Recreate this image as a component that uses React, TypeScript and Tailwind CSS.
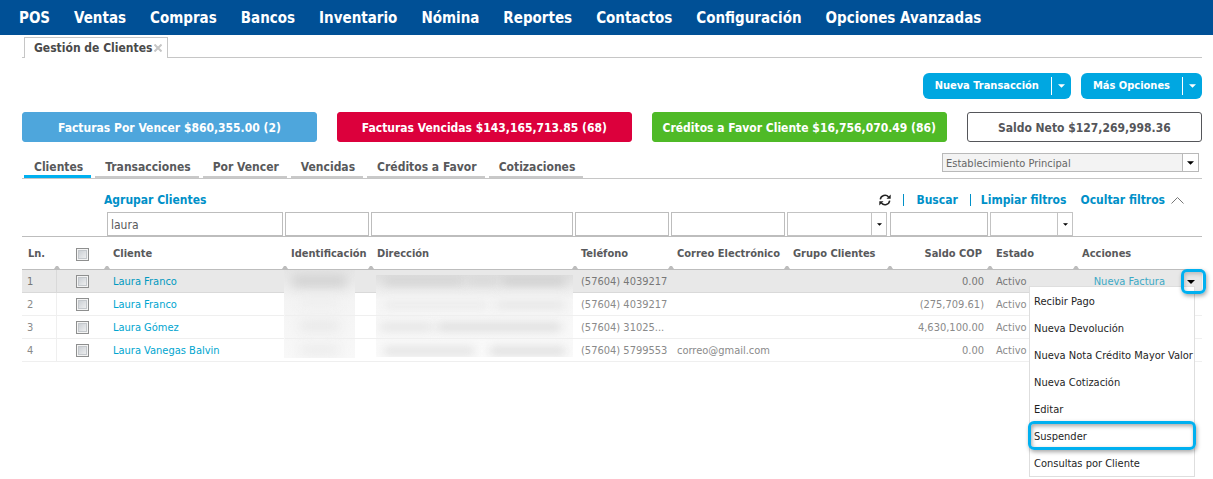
import { useState } from 'react';
import { clsx } from 'clsx';

interface Client {
  id: number;
  name: string;
  phone: string;
  email: string;
  balance: string;
}

interface SummaryCard {
  label: string;
  className: string;
}

const NAV_ITEMS = [
  'POS',
  'Ventas',
  'Compras',
  'Bancos',
  'Inventario',
  'Nómina',
  'Reportes',
  'Contactos',
  'Configuración',
  'Opciones Avanzadas',
];

const SUMMARY: SummaryCard[] = [
  { label: 'Facturas Por Vencer $860,355.00 (2)', className: 'flex-[295] bg-[#4ea6dc] border-[#4ea6dc] text-white' },
  { label: 'Facturas Vencidas $143,165,713.85 (68)', className: 'flex-[295] bg-[#dc003c] border-[#dc003c] text-white' },
  { label: 'Créditos a Favor Cliente $16,756,070.49 (86)', className: 'flex-[295] bg-[#4fba27] border-[#4fba27] text-white' },
  { label: 'Saldo Neto $127,269,998.36', className: 'flex-[235] bg-white border-[#55565a] text-[#55565a]' },
];

const TABS = ['Clientes', 'Transacciones', 'Por Vencer', 'Vencidas', 'Créditos a Favor', 'Cotizaciones'];

const CLIENTS: Client[] = [
  { id: 1, name: 'Laura Franco', phone: '(57604) 4039217', email: '', balance: '0.00' },
  { id: 2, name: 'Laura Franco', phone: '(57604) 4039217', email: '', balance: '(275,709.61)' },
  { id: 3, name: 'Laura Gómez', phone: '(57604) 31025...', email: '', balance: '4,630,100.00' },
  { id: 4, name: 'Laura Vanegas Balvin', phone: '(57604) 5799553', email: 'correo@gmail.com', balance: '0.00' },
];

const MENU_ITEMS = [
  'Recibir Pago',
  'Nueva Devolución',
  'Nueva Nota Crédito Mayor Valor',
  'Nueva Cotización',
  'Editar',
  'Suspender',
  'Consultas por Cliente',
];

const COLUMNS = [
  { label: 'Cliente', filter: 'text' },
  { label: 'Identificación', filter: 'text' },
  { label: 'Dirección', filter: 'text' },
  { label: 'Teléfono', filter: 'text' },
  { label: 'Correo Electrónico', filter: 'text' },
  { label: 'Grupo Clientes', filter: 'select' },
  { label: 'Saldo COP', filter: 'text' },
  { label: 'Estado', filter: 'select' },
];

function Caret({ className = 'h-1 w-2' }: { className?: string }) {
  return (
    <svg viewBox="0 0 8 4" className={className} fill="currentColor" aria-hidden="true">
      <path d="M0 0h8L4 4z" />
    </svg>
  );
}

function SortMark() {
  return (
    <svg viewBox="0 0 6 3" className="absolute -right-[3px] bottom-0 h-[3px] w-1.5" fill="#bdbdbd" aria-hidden="true">
      <path d="M0 3h6L4 0H2z" />
    </svg>
  );
}

function ActionButton({ label }: { label: string }) {
  return (
    <div className="flex h-[26px] items-center rounded-md bg-[#00a7e1] text-white">
      <button className="h-full px-3 pt-px text-[11px] font-bold">{label}</button>
      <button aria-label={`Abrir ${label}`} className="flex h-[18px] w-5 items-center justify-center border-l border-white">
        <Caret className="h-1 w-[7px]" />
      </button>
    </div>
  );
}

function Tick({ label }: { label: string }) {
  return (
    <input
      type="checkbox"
      aria-label={label}
      className="mx-auto block size-[13px] appearance-none border border-[#8e8f8f] bg-linear-to-br from-[#c3c8ce] to-[#f6f6f6] shadow-[inset_0_0_0_1px_#f4f4f4,inset_0_0_0_2px_#c4c8cc]"
    />
  );
}

function DropFilter({ label }: { label: string }) {
  return (
    <div className="relative mr-[3px] h-6">
      <select aria-label={label} className="block h-full w-full appearance-none border border-[#c3c3c3] bg-white" />
      <span className="pointer-events-none absolute inset-y-px right-px flex w-[15px] items-center justify-center border-l border-[#c3c3c3] text-black">
        <Caret className="h-[3px] w-[5px]" />
      </span>
    </div>
  );
}

// Redacted id numbers
function HiddenIds() {
  return (
    <div className="absolute top-0 -left-px h-[88px] w-[71px] overflow-hidden bg-linear-to-b from-[#e6e6e6] via-[#f4f4f4] via-35% to-[#f8f8f8]">
      <div className="mx-2 mt-1.5 h-2.5 bg-[#cbcbcb] blur-[6px]" />
      <div className="mx-4 mt-3 h-2 bg-[#ececec] blur-[6px]" />
      <div className="mx-4 mt-4 h-2 bg-[#e4e4e4] blur-[6px]" />
      <div className="mx-4 mt-4 h-2 bg-[#e8e8e8] blur-[6px]" />
    </div>
  );
}

// Redacted addresses
function HiddenAddresses() {
  return (
    <div className="absolute top-[5px] right-0.5 left-[5px] h-[82px] overflow-hidden bg-linear-to-b from-[#dfdfdf] via-[#f6f6f6] via-30% to-[#fafafa]">
      <div className="mx-2 mt-0.5 flex gap-1">
        <div className="h-2 flex-[5] bg-[#d2d2d2] blur-[5px]" />
        <div className="h-2 flex-[2] bg-[#d6d6d6] blur-[5px]" />
        <div className="h-2 flex-[4] bg-[#cdcdcd] blur-[5px]" />
      </div>
      <div className="mx-2 mt-4 flex gap-2">
        <div className="h-2 flex-[6] bg-[#eaeaea] blur-[5px]" />
        <div className="h-2 flex-[4] bg-[#e5e5e5] blur-[5px]" />
      </div>
      <div className="mt-3.5 mr-3 ml-1 flex gap-1">
        <div className="h-2 flex-[3] bg-[#e3e3e3] blur-[5px]" />
        <div className="h-2 flex-[7] bg-[#dcdcdc] blur-[5px]" />
      </div>
      <div className="mx-2 mt-4 flex gap-4">
        <div className="h-2 flex-[6] bg-[#e0e0e0] blur-[5px]" />
        <div className="h-2 flex-[5] bg-[#dcdcdc] blur-[5px]" />
      </div>
    </div>
  );
}

function RowMenu() {
  return (
    <ul className="absolute top-4 right-[7px] z-10 w-[166px] border border-[#dedede] bg-white">
      {MENU_ITEMS.map((item) => (
        <li key={item} className="relative">
          <button className="block h-[27px] w-full pt-1 pl-1 text-left whitespace-nowrap text-[#1e1e1e]">{item}</button>
          {item === 'Suspender' && (
            <span className="pointer-events-none absolute -inset-x-0.5 -inset-y-px rounded-md border-[3px] border-[#00b0f0] shadow-[1px_2px_4px_rgba(0,0,0,0.35),inset_1px_2px_4px_rgba(0,0,0,0.35)]" />
          )}
        </li>
      ))}
    </ul>
  );
}

export default function App() {
  const [activeTab, setActiveTab] = useState('Clientes');
  const [query, setQuery] = useState('laura');
  const [openRow, setOpenRow] = useState(1);

  return (
    <div className="min-h-screen bg-white font-['DejaVu_Sans_Condensed','DejaVu_Sans',sans-serif] text-[11px] text-[#58595b]">
      {/* Main nav */}
      <nav className="flex h-[35px] items-center gap-6 bg-[#005096] px-[19px] pt-0.5 text-[15px] font-bold whitespace-nowrap text-white">
        {NAV_ITEMS.map((item) => (
          <a key={item} href="#">
            {item}
          </a>
        ))}
      </nav>

      {/* Open page tab */}
      <div className="mr-[11px] ml-[22px] flex pt-0.5">
        <div className="w-0.5 border-b border-[#c6c6c6]" />
        <div className="flex h-[21px] items-center gap-0.5 border border-b-0 border-[#c6c6c6] pr-[5px] pl-[9px]">
          <span className="text-xs font-bold text-[#4a4a4a]">Gestión de Clientes</span>
          <button aria-label="Cerrar">
            <svg viewBox="0 0 8 8" className="size-2" stroke="#c6c6c6" strokeWidth="2" aria-hidden="true">
              <path d="M.5.5l7 7M7.5.5l-7 7" />
            </svg>
          </button>
        </div>
        <div className="flex-1 border-b border-[#c6c6c6]" />
      </div>

      <main className="mr-[11px] ml-[22px]">
        <div className="mt-[15px] flex justify-end gap-2.5">
          <ActionButton label="Nueva Transacción" />
          <ActionButton label="Más Opciones" />
        </div>

        {/* Totals */}
        <div className="mt-[13px] flex gap-5">
          {SUMMARY.map((card) => (
            <button
              key={card.label}
              className={clsx('h-[30px] rounded-[3px] border pt-px text-xs font-bold whitespace-nowrap', card.className)}
            >
              {card.label}
            </button>
          ))}
        </div>

        {/* Section tabs */}
        <div className="mt-[11px] flex h-[26px] items-end justify-between border-b border-[#c6c6c6]">
          <div className="flex gap-1 pl-0.5">
            {TABS.map((tab) => (
              <button
                key={tab}
                onClick={() => setActiveTab(tab)}
                className={clsx(
                  'h-[22px] pr-2 pl-2.5 text-xs font-bold',
                  activeTab === tab ? 'border-b-[3px] border-[#00b0f0] pt-[3px]' : 'border-b-2 border-[#c9c9c9] pt-0.5'
                )}
              >
                {tab}
              </button>
            ))}
          </div>
          <div className="relative mr-[3px] mb-[6px] h-[19px] w-[257px]">
            <select
              aria-label="Establecimiento"
              className="block h-full w-full appearance-none border border-[#b9b9b9] bg-[#f3f3f3] pt-0.5 pl-[3px] text-[#666]"
            >
              <option>Establecimiento Principal</option>
            </select>
            <span className="pointer-events-none absolute inset-y-px right-px flex w-4 items-center justify-center border-l border-[#b9b9b9] bg-white text-black">
              <Caret className="h-1 w-[7px]" />
            </span>
          </div>
        </div>

        {/* Grid tools */}
        <div className="flex h-[33px] items-end justify-between pr-[18px] pb-1 pl-[82px] text-xs leading-4 font-bold text-[#0090c8]">
          <a href="#">Agrupar Clientes</a>
          <div className="flex items-center">
            <button aria-label="Actualizar" className="mr-3 text-[#222]">
              <svg viewBox="0 0 12 12" className="size-3" fill="none" stroke="currentColor" strokeWidth="1.5" aria-hidden="true">
                <path d="M1.300 5.300A4.700 4.700 0 0 1 9.600 3M10.700 6.700A4.700 4.700 0 0 1 2.400 9" />
                <path d="M11.700.6v4.200H7.500zM.3 11.400V7.200h4.200z" fill="currentColor" stroke="none" />
              </svg>
            </button>
            <span className="mr-3 h-3 w-px bg-[#0090c8]" />
            <a href="#" className="mr-3">Buscar</a>
            <span className="mr-2.5 h-3 w-px bg-[#0090c8]" />
            <a href="#" className="mr-3.5">Limpiar filtros</a>
            <button className="flex items-center gap-1.5">
              Ocultar filtros
              <svg viewBox="0 0 13 7" className="h-[7px] w-[13px]" fill="none" stroke="#777" aria-hidden="true">
                <path d="M.5 6.500l6-6 6 6" />
              </svg>
            </button>
          </div>
        </div>

        <table className="w-full table-fixed border-separate border-spacing-0">
          <colgroup>
            <col className="w-[35px]" />
            <col className="w-[50px]" />
            <col className="w-[178px]" />
            <col className="w-[86px]" />
            <col />
            <col className="w-24" />
            <col className="w-[116px]" />
            <col className="w-[103px]" />
            <col className="w-[100px]" />
            <col className="w-[86px]" />
            <col className="w-[126px]" />
          </colgroup>
          <thead>
            <tr className="h-[25px] align-top *:border-b *:border-[#bdbdbd]">
              <td />
              <td />
              {COLUMNS.map((col) => (
                <td key={col.label}>
                  {col.filter === 'select' ? (
                    <DropFilter label={col.label} />
                  ) : (
                    <div className="pr-0.5">
                      <input
                        aria-label={col.label}
                        value={col.label === 'Cliente' ? query : undefined}
                        onChange={(e) => col.label === 'Cliente' && setQuery(e.target.value)}
                        className="block h-6 w-full border border-[#bdbdbd] px-[3px] pt-px text-xs"
                      />
                    </div>
                  )}
                </td>
              ))}
              <td />
            </tr>
            <tr className="h-[33px] text-left text-[11px] whitespace-nowrap *:border-b *:border-[#bdbdbd] *:pt-0.5">
              <th className="relative pl-1.5">
                Ln.
                <SortMark />
              </th>
              <th className="relative">
                <Tick label="Seleccionar todos" />
                <SortMark />
              </th>
              {COLUMNS.map((col) => (
                <th key={col.label} className={clsx('relative', col.label === 'Saldo COP' ? 'pr-2 text-right' : 'pl-1.5')}>
                  {col.label}
                  <SortMark />
                </th>
              ))}
              <th className="pl-1.5">Acciones</th>
            </tr>
          </thead>
          <tbody>
            {CLIENTS.map((client) => (
              <tr
                key={client.id}
                className={clsx(
                  'h-[23px] whitespace-nowrap *:border-b *:pt-0.5',
                  client.id === 1
                    ? 'bg-[#e8e8e8] text-[#777] *:border-[#d9d9d9]'
                    : 'text-[#8a8a8a] *:border-[#efefef]'
                )}
              >
                <td className="border-r pl-[5px]">{client.id}</td>
                <td className="pt-0!">
                  <Tick label={`Seleccionar ${client.name}`} />
                </td>
                <td className="pl-1.5">
                  <a href="#" className={client.id === 1 ? 'text-[#0099c0]' : 'text-[#00a5cf]'}>
                    {client.name}
                  </a>
                </td>
                <td className="relative">{client.id === 1 && <HiddenIds />}</td>
                <td className="relative">{client.id === 1 && <HiddenAddresses />}</td>
                <td className="pl-1.5">{client.phone}</td>
                <td className="pl-1.5">{client.email}</td>
                <td />
                <td className="pr-1.5 text-right">{client.balance}</td>
                <td className="pl-1.5">Activo</td>
                <td className="relative">
                  <div className="flex items-center justify-end gap-[22px] pr-[7px]">
                    {openRow === client.id && <a href="#" className="text-[#3ba9c6]">Nueva Factura</a>}
                    <button
                      aria-label={`Acciones de ${client.name}`}
                      onClick={() => setOpenRow(client.id)}
                      className="flex h-4 items-center text-black"
                    >
                      <Caret />
                    </button>
                  </div>
                  {openRow === client.id && (
                    <>
                      <RowMenu />
                      <span className="pointer-events-none absolute -top-px -right-1 z-20 size-[25px] rounded-md border-[3px] border-[#00b0f0] shadow-[1px_2px_4px_rgba(0,0,0,0.35),inset_1px_2px_4px_rgba(0,0,0,0.2)]" />
                    </>
                  )}
                </td>
              </tr>
            ))}
          </tbody>
        </table>
      </main>
    </div>
  );
}
